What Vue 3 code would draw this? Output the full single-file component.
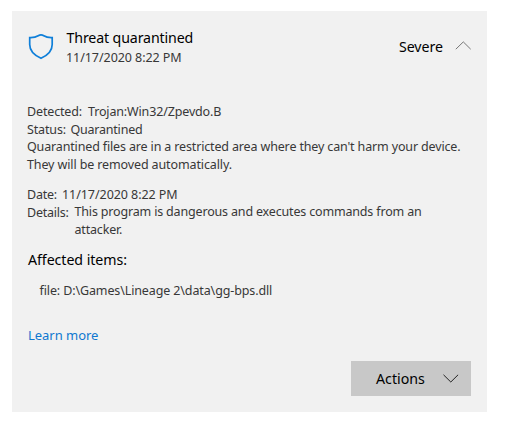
<script setup>
const threat = {
  title: 'Threat quarantined',
  date: '11/17/2020 8:22 PM',
  severity: 'Severe',
  name: 'Trojan:Win32/Zpevdo.B',
  status: 'Quarantined',
  file: 'file: D:\\Games\\Lineage 2\\data\\gg-bps.dll',
}
</script>

<template>
  <main class="card">
    <header class="head">
      <svg class="shield" width="26" height="28" viewBox="0 0 26 28" aria-hidden="true">
        <path d="M1.7 4.6C6 4.8 8.2 4 10.2 2.7C12 1.5 14 1.5 15.8 2.7C17.8 4 20 4.8 24.2 4.6V11.5C24.2 18 19 22.6 13 25.3C7 22.6 1.7 18 1.7 11.5Z" />
      </svg>
      <div class="heading">
        <h1 class="title">{{ threat.title }}</h1>
        <div class="when">{{ threat.date }}</div>
      </div>
      <span class="severity">{{ threat.severity }}</span>
      <svg class="chevron up" width="16" height="9" viewBox="0 0 16 9" aria-hidden="true">
        <path d="M0.8 8.2L8.3 0.9L15.7 8.2" />
      </svg>
    </header>

    <section class="facts">
      <div class="row"><span class="label">Detected:</span><span class="trojan">{{ threat.name }}</span></div>
      <div class="row"><span class="label status-label">Status:</span><span class="status">{{ threat.status }}</span></div>
      <p class="note">Quarantined files are in a restricted area where they can't harm your device.<br><span class="removed">They will be removed automatically.</span></p>
    </section>

    <section class="details">
      <div class="row"><span class="label date-label">Date:</span><span class="date">{{ threat.date }}</span></div>
      <div class="row"><span class="label details-label">Details:</span><p class="description">This program is dangerous and executes commands from an<br>attacker.</p></div>
    </section>

    <h2 class="affected">Affected items:</h2>
    <div class="file">{{ threat.file }}</div>
    <a class="learn">Learn more</a>

    <button class="actions" type="button">
      <span>Actions</span>
      <svg class="chevron down" width="16" height="9" viewBox="0 0 16 9" aria-hidden="true">
        <path d="M0.5 0.8L7.8 8L15.1 0.8" />
      </svg>
    </button>
  </main>
</template>

<style>
body { background: #fff; }
</style>

<style scoped>
.card {
  box-sizing: border-box;
  width: 475px;
  height: 401px;
  margin: 11px 0 0 12px;
  padding: 17px 16px 16px 15px;
  display: flex;
  flex-direction: column;
  background: #f1f1f1;
  color: #383838;
  font: 12.5px/18px "Noto Sans", "Open Sans", sans-serif;
  letter-spacing: -0.15px;
  white-space: nowrap;
}
h1, h2, p { margin: 0; font-weight: 400; }
.head { display: flex; height: 38px; align-items: flex-start; }
.shield { margin: 5px 0 0 1px; flex: none; }
.shield path { fill: none; stroke: #0f7fd9; stroke-width: 1.7; stroke-linejoin: miter; }
.heading { margin-left: 12px; flex: 1; }
.title { margin-left: 0.5px; font-size: 14.2px; line-height: 20px; letter-spacing: -0.13px; color: #000; }
.when { margin-top: 1px; letter-spacing: -0.06px; }
.severity { margin-top: 9px; font-size: 14.2px; line-height: 20px; letter-spacing: -0.03px; color: #000; }
.chevron { flex: none; }
.chevron path { fill: none; stroke: #222; stroke-width: 1; }
.chevron.up { margin: 13px 0 0 12px; }
.chevron.up path { stroke: #777; }
.chevron.down { margin-bottom: 1px; }
.facts { margin-top: 37px; }
.row { display: flex; }
.label { flex: none; width: 61px; }
.status-label { width: 43.5px; }
.status { letter-spacing: -0.22px; }
.note { margin-top: -1px; }
.removed { letter-spacing: -0.12px; }
.details { margin-top: 12px; }
.date-label { width: 35px; }
.date { letter-spacing: -0.06px; }
.details-label { width: 47.5px; }
.details-label, .date-label { letter-spacing: -0.25px; }
.description { margin-top: -1px; letter-spacing: -0.17px; }
.affected { margin: 11px 0 0 1px; font-size: 14.2px; line-height: 20px; letter-spacing: -0.06px; color: #000; }
.file { margin: 12px 0 0 12.5px; letter-spacing: -0.12px; }
.learn { margin: 26px 0 0 1px; font-size: 13px; letter-spacing: -0.03px; color: #0f78d0; }
.actions {
  box-sizing: border-box;
  width: 120px;
  height: 35px;
  margin: auto 0 0 auto;
  padding: 0 12px 0 25px;
  display: flex;
  align-items: center;
  justify-content: space-between;
  border: 0;
  background: #c8c8c8;
  color: #000;
  font: 14.2px/20px "Noto Sans", "Open Sans", sans-serif;
}
</style>
